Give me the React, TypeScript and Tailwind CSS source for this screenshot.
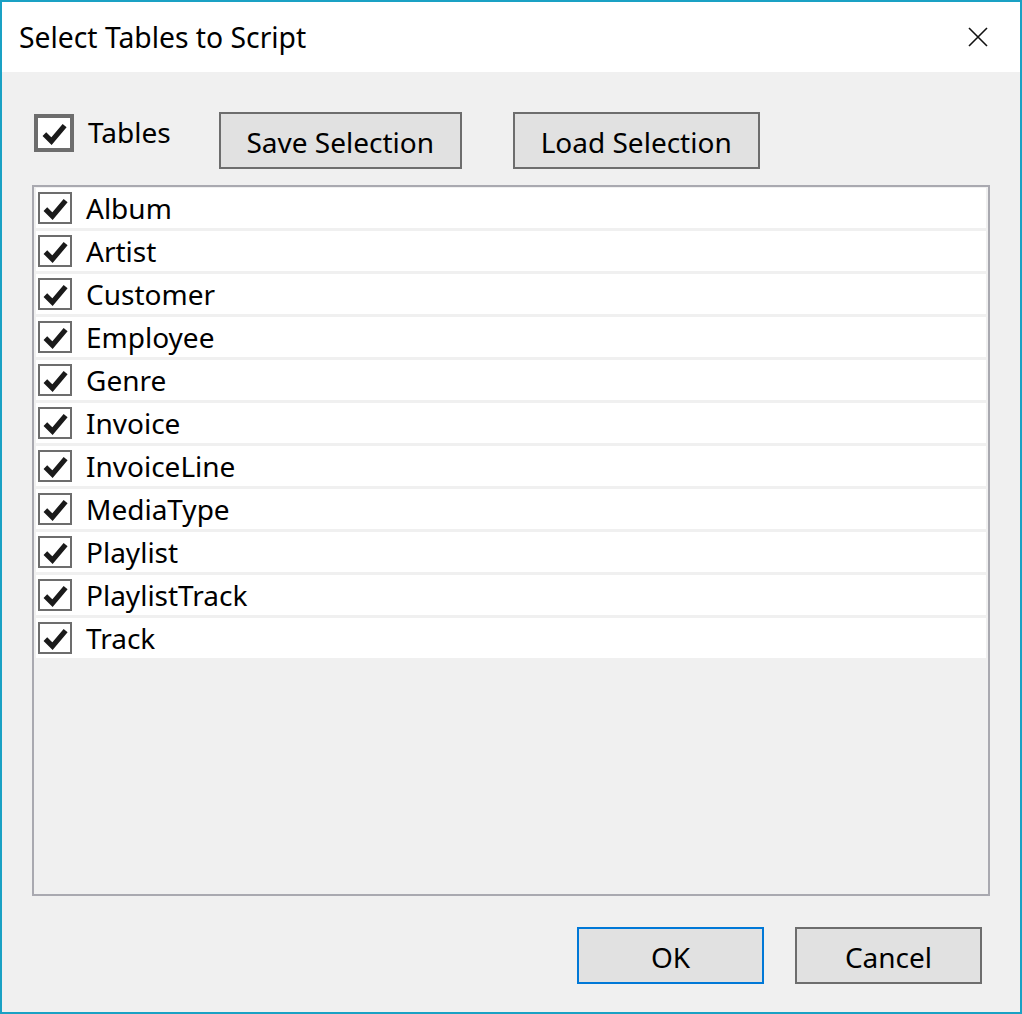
import React, { useState } from "react";

const tableNames = [
  "Album",
  "Artist",
  "Customer",
  "Employee",
  "Genre",
  "Invoice",
  "InvoiceLine",
  "MediaType",
  "Playlist",
  "PlaylistTrack",
  "Track",
];

const CheckMark = ({ size }: { size: number }) => (
  <svg width={size} height={size} viewBox="0 0 24 24">
    <path d="M3 12.5 L9.3 18.8 L21 5" fill="none" stroke="#1a1a1a" strokeWidth="4.6" />
  </svg>
);

const Checkbox = ({ checked, onToggle, big }: { checked: boolean; onToggle: () => void; big?: boolean }) => (
  <div
    onClick={onToggle}
    className={
      big
        ? "w-[40px] h-[38px] border-[4px] border-[#6d6d6d] bg-white flex items-center justify-center shrink-0"
        : "w-[34px] h-[32px] border-2 border-[#6d6d6d] bg-white flex items-center justify-center shrink-0"
    }
  >
    {checked && <CheckMark size={27} />}
  </div>
);

const WinButton = ({ label, width, primary }: { label: string; width: string; primary?: boolean }) => (
  <button
    className={`${width} h-[57px] bg-[#e1e1e1] text-[28px] text-black border-2 pt-[2px] ${
      primary ? "border-[#0078d7]" : "border-[#6d6d6d]"
    }`}
  >
    {label}
  </button>
);

const App = () => {
  const [checked, setChecked] = useState<boolean[]>(tableNames.map(() => true));
  const allChecked = checked.every((c) => c);

  return (
    <div
      className="w-[1022px] h-[1014px] border-2 border-[#1aa1c4] bg-[#f0f0f0] flex flex-col text-black"
      style={{ fontFamily: '"Noto Sans", "Open Sans", sans-serif' }}
    >
      <div className="h-[70px] bg-white flex items-center justify-between pl-[17px] pr-[32px] shrink-0">
        <span className="text-[28.3px] leading-none">Select Tables to Script</span>
        <svg width="20" height="20" viewBox="0 0 20 20">
          <path d="M1 1 L19 19 M19 1 L1 19" stroke="#111" strokeWidth="1.6" />
        </svg>
      </div>

      <div className="flex items-start pl-[32px] mt-[40px] h-[57px]">
        <div className="flex items-center mt-[2px]">
          <Checkbox big checked={allChecked} onToggle={() => setChecked(tableNames.map(() => !allChecked))} />
          <span className="ml-[14px] text-[28px] leading-none -mt-[3px]">Tables</span>
        </div>
        <div className="ml-[48px]">
          <WinButton label="Save Selection" width="w-[243px]" />
        </div>
        <div className="ml-[51px]">
          <WinButton label="Load Selection" width="w-[247px]" />
        </div>
      </div>

      <div className="ml-[30px] mt-[16px] w-[958px] h-[711px] border-2 border-[#a9a9b0] pl-[2px] pr-[2px] pt-[1px] flex flex-col gap-[3px]">
        {tableNames.map((name, i) => (
          <div key={name} className="h-[40px] bg-white flex items-center pl-[2px]">
            <Checkbox
              checked={checked[i]}
              onToggle={() => setChecked(checked.map((c, j) => (j === i ? !c : c)))}
            />
            <span className="ml-[14px] text-[28px] leading-none">{name}</span>
          </div>
        ))}
      </div>

      <div className="flex justify-end gap-[31px] mt-[31px] pr-[38px]">
        <WinButton label="OK" width="w-[187px]" primary />
        <WinButton label="Cancel" width="w-[187px]" />
      </div>
    </div>
  );
};

export default App;
